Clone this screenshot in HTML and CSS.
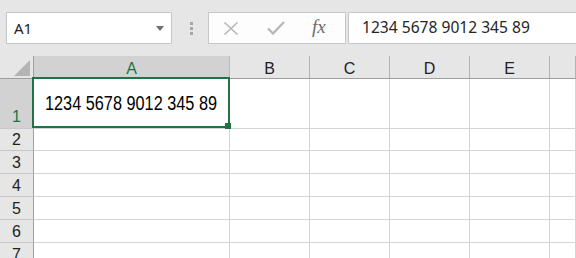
FILE: index.html
```html
<!DOCTYPE html>
<html lang="en">
<head>
    <meta charset="UTF-8">
    <title>Sheet</title>
    <link rel="stylesheet" href="styles.css">
</head>
<body>

    <div class="toolbar">
        <div class="name-box">
            <span>A1</span>
            <svg class="caret" width="8" height="5" viewBox="0 0 8 5"><path d="M0 0H8L4 5Z" fill="#6f6f6f"/></svg>
        </div>
        <div class="grip">
            <span></span><span></span><span></span>
        </div>
        <div class="fx-buttons">
            <svg class="btn" width="16" height="13" viewBox="0 0 16 13">
                <path d="M1.5 0.5L14.5 12.5M14.5 0.5L1.5 12.5" stroke="#b8b8b8" stroke-width="1.6" fill="none"/>
            </svg>
            <svg class="btn" width="18" height="14" viewBox="0 0 18 14">
                <path d="M1 7.5L6 12.5L17 1" stroke="#b8b8b8" stroke-width="2.4" fill="none"/>
            </svg>
            <span class="fx">fx</span>
        </div>
        <div class="formula">1234 5678 9012 345 89</div>
    </div>

    <div class="sheet">
        <div class="corner"><span class="tri"></span></div>
        <div class="col-head selected">A</div>
        <div class="col-head">B</div>
        <div class="col-head">C</div>
        <div class="col-head">D</div>
        <div class="col-head">E</div>
        <div class="col-head"></div>

        <div class="row-head selected">1</div>
        <div class="cell active">
            <span class="value">1234 5678 9012 345 89</span>
            <div class="selection"><span class="handle"></span></div>
        </div>
        <div class="cell"></div><div class="cell"></div><div class="cell"></div><div class="cell"></div><div class="cell"></div>

        <div class="row-head">2</div>
        <div class="cell"></div><div class="cell"></div><div class="cell"></div><div class="cell"></div><div class="cell"></div><div class="cell"></div>
        <div class="row-head">3</div>
        <div class="cell"></div><div class="cell"></div><div class="cell"></div><div class="cell"></div><div class="cell"></div><div class="cell"></div>
        <div class="row-head">4</div>
        <div class="cell"></div><div class="cell"></div><div class="cell"></div><div class="cell"></div><div class="cell"></div><div class="cell"></div>
        <div class="row-head">5</div>
        <div class="cell"></div><div class="cell"></div><div class="cell"></div><div class="cell"></div><div class="cell"></div><div class="cell"></div>
        <div class="row-head">6</div>
        <div class="cell"></div><div class="cell"></div><div class="cell"></div><div class="cell"></div><div class="cell"></div><div class="cell"></div>
        <div class="row-head">7</div>
        <div class="cell"></div><div class="cell"></div><div class="cell"></div><div class="cell"></div><div class="cell"></div><div class="cell"></div>
    </div>

</body>
</html>
```

FILE: styles.css
```css
* {
    box-sizing: border-box;
}

body {
    margin: 0;
    background: #e6e6e6;
    font-family: 'Liberation Sans', Arial, sans-serif;
    overflow: hidden;
    width: 576px;
    height: 258px;
}

.toolbar {
    display: flex;
    align-items: flex-start;
    height: 56px;
    padding: 12px 0 0 6px;
}

.name-box {
    width: 166px;
    height: 32px;
    background: #fff;
    border: 1px solid #c6c6c6;
    display: flex;
    align-items: center;
    justify-content: space-between;
    padding: 0 7px 0 7px;
    font-family: 'Noto Sans', sans-serif;
    font-size: 15px;
    color: #222;
}

.caret {
    margin-top: 1px;
}

.grip {
    width: 36px;
    height: 32px;
    display: flex;
    flex-direction: column;
    align-items: center;
    justify-content: center;
    gap: 2px;
    padding-left: 2px;
}

.grip span {
    width: 3px;
    height: 3px;
    background: #a6a6a6;
}

.fx-buttons {
    width: 138px;
    height: 32px;
    background: #fdfdfd;
    border: 1px solid #c6c6c6;
    display: flex;
    align-items: center;
    padding-left: 14px;
}

.fx-buttons .btn:nth-child(2) {
    margin-left: 28px;
}

.fx {
    margin-left: 27px;
    font-family: 'Liberation Serif', serif;
    font-style: italic;
    font-size: 19px;
    color: #6b6b6b;
    margin-top: -3px;
}

.formula {
    flex: 1;
    height: 32px;
    margin-left: 2px;
    margin-right: -2px;
    background: #fff;
    border: 1px solid #c6c6c6;
    padding-left: 13px;
    font-family: 'Noto Sans', sans-serif;
    font-size: 15.6px;
    line-height: 29px;
    color: #262626;
}

.sheet {
    display: grid;
    grid-template-columns: 34px 196px 80px 80px 80px 80px 1fr;
    grid-template-rows: 23px 50px 22px 23px 23px 23px 23px 23px;
    background: #fff;
}

.corner {
    position: relative;
    background: #e6e6e6;
    border-right: 1px solid #a0a0a0;
    border-bottom: 1px solid #9e9e9e;
}

.tri {
    position: absolute;
    right: 3px;
    bottom: 2px;
    width: 0;
    height: 0;
    border-left: 16px solid transparent;
    border-bottom: 16px solid #b4b4b4;
}

.col-head {
    background: #e6e6e6;
    border-right: 1px solid #b3b3b3;
    border-bottom: 1px solid #9e9e9e;
    display: flex;
    align-items: center;
    justify-content: center;
    padding-top: 3px;
    font-size: 16px;
    color: #222;
}

.col-head.selected {
    background: #d2d2d2;
    color: #217346;
    border-right-color: #bcbcbc;
}

.row-head {
    background: #e6e6e6;
    border-right: 1px solid #a0a0a0;
    border-bottom: 1px solid #c8c8c8;
    display: flex;
    align-items: flex-end;
    justify-content: center;
    padding-bottom: 1px;
    font-size: 16px;
    line-height: 18px;
    color: #222;
}

.row-head.selected {
    background: #d2d2d2;
    color: #217346;
    padding-bottom: 2px;
}

.cell {
    border-right: 1px solid #d4d4d4;
    border-bottom: 1px solid #d4d4d4;
}

.cell.active {
    position: relative;
    display: flex;
    align-items: center;
    justify-content: center;
    padding-bottom: 1px;
}

.value {
    display: inline-block;
    white-space: nowrap;
    font-size: 19.5px;
    color: #000;
    transform: scaleX(0.835);
}

.selection {
    position: absolute;
    top: -2px;
    left: -2px;
    right: -1px;
    bottom: 0;
    border: 2px solid #217346;
}

.handle {
    position: absolute;
    right: -3px;
    bottom: -3px;
    width: 6px;
    height: 6px;
    background: #217346;
}
```
